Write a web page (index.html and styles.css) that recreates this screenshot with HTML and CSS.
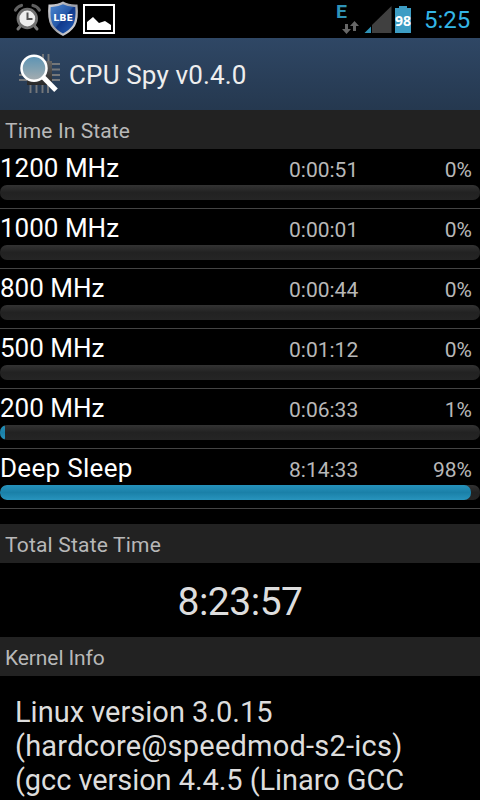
FILE: index.html
```
<!DOCTYPE html>
<html lang="en">
<head>
<meta charset="utf-8">
<title>CPU Spy</title>
<link rel="stylesheet" href="styles.css">
</head>
<body>
<header class="status">
  <svg class="status-left" width="130" height="38" viewBox="0 0 130 38">
    <defs>
      <linearGradient id="shield" x1="0" y1="0" x2="1" y2="1"><stop offset="0" stop-color="#4c86d0"/><stop offset=".48" stop-color="#2558a8"/><stop offset=".52" stop-color="#10398b"/><stop offset="1" stop-color="#2461ba"/></linearGradient>
      <linearGradient id="rim" x1="0" y1="0" x2="1" y2="1"><stop offset="0" stop-color="#d8d8dc"/><stop offset=".5" stop-color="#9b9da5"/><stop offset="1" stop-color="#eee"/></linearGradient>
    </defs>
    <g fill="none" stroke-linecap="round">
      <path d="M15.500 10Q17.500 6.500 21.500 5.500M33 5.500Q37.500 6.500 39.300 10" stroke="#606060" stroke-width="3.200"/>
      <path d="M20.500 26l-2.500 3M34.500 26l2.500 3" stroke="#777" stroke-width="3"/>
      <circle cx="27.300" cy="18.500" r="9.300" fill="#eee" stroke="#707070" stroke-width="2.800"/>
      <path d="M27.500 12.500v6.500h5" stroke="#555" stroke-width="2" stroke-linecap="butt"/>
    </g>
    <path d="M63 1.500Q69 5 77.500 4.500Q79 19 75 26Q71 32 63 36Q55 32 51 26Q47 19 48.500 4.500Q57 5 63 1.500Z" fill="url(#rim)"/>
    <path d="M63 4.300Q69 7.300 75.300 7Q76.300 19 73 25Q69.500 30 63 33.500Q56.500 30 53 25Q49.700 19 50.700 7Q57 7.300 63 4.300Z" fill="url(#shield)"/>
    <text x="63.200" y="21" text-anchor="middle" class="lbe" textLength="20" lengthAdjust="spacingAndGlyphs">LBE</text>
    <rect x="84" y="5" width="30" height="28" fill="#000" stroke="#fff" stroke-width="2"/>
    <path d="M87 30v-8l6-5 6 6 6-2 6 4v5z" fill="#fff"/>
  </svg>
  <svg class="status-right" width="86" height="38" viewBox="330 0 86 38">
    <text x="336" y="18" class="edge" textLength="11" lengthAdjust="spacingAndGlyphs">E</text>
    <path d="M345 24h3v5h3l-4.500 5-4.500-5h3zM353 31h3v-5h3l-4.500-5-4.500 5h3z" fill="#666"/>
    <path d="M371 26.500V33H364.500z" fill="#2f93b8"/>
    <path d="M372 33V25L391.500 6V33z" fill="#404040"/>
    <path d="M399 6h8v2h4v25h-16V8h4z" fill="#3d9dc4"/>
    <text x="403.100" y="26" text-anchor="middle" class="level" textLength="16" lengthAdjust="spacingAndGlyphs">98</text>
  </svg>
  <span class="clock">5:25</span>
</header>

<div class="action-bar">
  <svg width="48" height="48" viewBox="16 50 48 48">
    <defs>
      <linearGradient id="chip" x1="0" y1="0" x2="0" y2="1"><stop offset="0" stop-color="#666"/><stop offset=".6" stop-color="#3c3c3c"/><stop offset="1" stop-color="#2a2a2a"/></linearGradient>
      <linearGradient id="lens" x1="0" y1="0" x2="0" y2="1"><stop offset="0" stop-color="#5b93b5"/><stop offset=".5" stop-color="#7fa0b1"/><stop offset="1" stop-color="#a7adb0"/></linearGradient>
    </defs>
    <path d="M43 54v7M48.500 54v7M19 75h8M19 80h8M52 64h8M52 69.500h8M52 75h8M52 80h8M30.500 85v8M36.500 85v8M42.500 85v8M48 85v8" stroke="#74777a" stroke-width="1.900"/>
    <rect x="27" y="61" width="25" height="24" fill="url(#chip)"/>
    <path d="M43 77l13 13.300" stroke="#fff" stroke-width="5"/>
    <circle cx="34" cy="68.300" r="12.500" fill="url(#lens)" stroke="#fff" stroke-width="2.500"/>
  </svg>
  <h1 class="title">CPU Spy v0.4.0</h1>
</div>

<main>
  <h2 class="section">Time In State</h2>
  <ul class="states">
    <li class="state"><div class="line"><span class="name">1200 MHz</span><span class="time">0:00:51</span><span class="pct">0%</span></div><div class="bar"></div></li>
    <li class="state"><div class="line"><span class="name">1000 MHz</span><span class="time">0:00:01</span><span class="pct">0%</span></div><div class="bar"></div></li>
    <li class="state"><div class="line"><span class="name">800 MHz</span><span class="time">0:00:44</span><span class="pct">0%</span></div><div class="bar"></div></li>
    <li class="state"><div class="line"><span class="name">500 MHz</span><span class="time">0:01:12</span><span class="pct">0%</span></div><div class="bar"></div></li>
    <li class="state"><div class="line"><span class="name">200 MHz</span><span class="time">0:06:33</span><span class="pct">1%</span></div><div class="bar"><div class="fill small" style="width:1.04%"></div></div></li>
    <li class="state"><div class="line"><span class="name sleep">Deep Sleep</span><span class="time">8:14:33</span><span class="pct">98%</span></div><div class="bar"><div class="fill" style="width:98.13%"></div></div></li>
  </ul>
  <h2 class="section total-heading">Total State Time</h2>
  <p class="total">8:23:57</p>
  <h2 class="section kernel-heading">Kernel Info</h2>
  <p class="kernel">Linux version 3.0.15<br><span class="host">(hardcore@speedmod-s2-ics)</span><br><span class="compiler">(gcc version 4.4.5 (Linaro GCC</span></p>
</main>
</body>
</html>
```
FILE: styles.css
```
* { box-sizing: border-box; margin: 0; padding: 0; }
body {
  width: 480px;
  height: 800px;
  overflow: hidden;
  background: #000;
  color: #fff;
  font-family: Roboto, "Liberation Sans", sans-serif;
}
svg { display: block; flex: none; }
.status { display: flex; height: 38px; }
.status-right { margin-left: auto; }
.lbe { font: 700 9.500px "DejaVu Sans", sans-serif; fill: #fff; }
.edge { font: 700 18px Roboto, sans-serif; fill: #2f93b8; }
.level { font: 700 14px "Open Sans", sans-serif; fill: #fff; }
.clock {
  width: 64px;
  padding-left: 8px;
  line-height: 40px;
  font-size: 24px;
  letter-spacing: 0;
  color: #33b5e5;
}
.action-bar {
  display: flex;
  align-items: center;
  height: 72px;
  padding-left: 16px;
  background: linear-gradient(#2f4765, #25384f);
}
.title {
  padding-top: 2px;
  margin-left: 5px;
  font-size: 26px;
  font-weight: 400;
  line-height: 36px;
  letter-spacing: 0.150px;
  color: #eee;
}
.section {
  height: 39px;
  padding-left: 5px;
  background: #222;
  color: #b8b8b8;
  font-size: 21px;
  font-weight: 400;
  line-height: 43px;
  letter-spacing: 0.100px;
}
.total-heading { letter-spacing: 0.200px; }
.kernel-heading { letter-spacing: -0.100px; }
.states { list-style: none; margin-bottom: 15px; }
.state { height: 60px; border-bottom: 1px solid #444; }
.line {
  display: grid;
  grid-template-columns: 289px 1fr 90px;
  height: 36px;
  padding-right: 8px;
  line-height: 38px;
}
.name { font-size: 26px; }
.sleep { letter-spacing: 0.300px; }
.time, .pct { font-size: 21px; color: #b8b8b8; line-height: 43px; }
.pct { text-align: right; }
.bar {
  height: 15px;
  overflow: hidden;
  border-radius: 7px;
  background: linear-gradient(#333, #222 50%, #252525);
}
.fill {
  height: 15px;
  border-radius: 7px;
  background: linear-gradient(#2692bb, #1a80a8 50%, #2894bd);
}
.small { border-radius: 2px; }
.total {
  height: 74px;
  color: #ddd;
  font-size: 39px;
  line-height: 78px;
  letter-spacing: -0.500px;
  text-align: center;
}
.kernel {
  padding: 19px 15px 0;
  color: #ddd;
  font-size: 29px;
  line-height: 34px;
  white-space: nowrap;
}
.host { letter-spacing: 0.230px; }
.compiler { letter-spacing: -0.070px; }
```
